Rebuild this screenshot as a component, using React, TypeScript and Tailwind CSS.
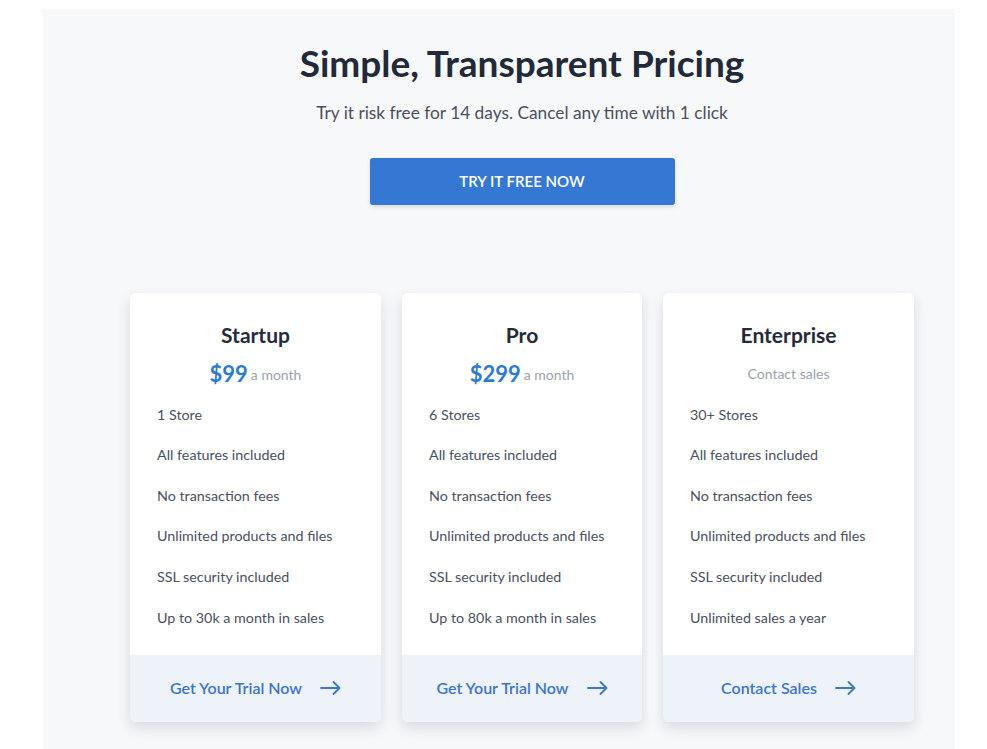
import React from "react";

type Plan = {
  name: string;
  price?: string;
  priceNote: string;
  features: string[];
  cta: string;
  width: string;
};

const plans: Plan[] = [
  {
    name: "Startup",
    price: "$99",
    priceNote: "a month",
    features: [
      "1 Store",
      "All features included",
      "No transaction fees",
      "Unlimited products and files",
      "SSL security included",
      "Up to 30k a month in sales",
    ],
    cta: "Get Your Trial Now",
    width: "w-[251px]",
  },
  {
    name: "Pro",
    price: "$299",
    priceNote: "a month",
    features: [
      "6 Stores",
      "All features included",
      "No transaction fees",
      "Unlimited products and files",
      "SSL security included",
      "Up to 80k a month in sales",
    ],
    cta: "Get Your Trial Now",
    width: "w-[240px]",
  },
  {
    name: "Enterprise",
    priceNote: "Contact sales",
    features: [
      "30+ Stores",
      "All features included",
      "No transaction fees",
      "Unlimited products and files",
      "SSL security included",
      "Unlimited sales a year",
    ],
    cta: "Contact Sales",
    width: "w-[251px]",
  },
];

function Arrow() {
  return (
    <svg width="21" height="14" viewBox="0 0 21 14" fill="none" className="ml-[18px]">
      <path d="M1 7H19.5M13.5 1L19.5 7L13.5 13" stroke="#3d76c9" strokeWidth="1.8" strokeLinecap="round" strokeLinejoin="round" />
    </svg>
  );
}

function Card({ plan }: { plan: Plan }) {
  return (
    <div className={`${plan.width} flex flex-col rounded-md bg-white shadow-[0_6px_14px_rgba(30,40,70,0.14)] overflow-hidden`}>
      <div className="flex flex-col px-[27px] pt-[28px] pb-[17px]">
        <div className="text-center text-[21px] leading-[28px] font-bold text-[#252b3b]">{plan.name}</div>
        <div className="mt-[10px] flex h-[28px] items-center justify-center">
          {plan.price ? (
            <>
              <span className="text-[22px] font-bold text-[#2c7bd1]">{plan.price}</span>
              <span className="ml-[3px] mt-[3px] text-[14px] text-[#9aa1ab]">{plan.priceNote}</span>
            </>
          ) : (
            <span className="text-[14px] text-[#9aa1ab]">{plan.priceNote}</span>
          )}
        </div>
        <ul className="mt-[7px] flex flex-col">
          {plan.features.map((f) => (
            <li key={f} className="flex h-[40.6px] items-center text-[14.3px] text-[#4a5060]">
              {f}
            </li>
          ))}
        </ul>
      </div>
      <div className="flex h-[67px] items-center justify-center bg-[#eef2f9]">
        <span className="text-[16px] font-semibold text-[#3d76c9]">{plan.cta}</span>
        <Arrow />
      </div>
    </div>
  );
}

export default function App() {
  return (
    <div className="min-h-[749px] bg-white pt-[9px]" style={{ fontFamily: "Lato, 'Noto Sans', sans-serif" }}>
      <div className="ml-[43px] w-[912px] bg-[#f7f8fa] pl-[87px] pr-[41px] pb-[40px]">
        <div className="flex flex-col items-center">
          <h1 className="mt-[31px] text-[37px] leading-[46px] font-bold text-[#222a3a]">Simple, Transparent Pricing</h1>
          <p className="mt-[15px] text-[17.3px] leading-[24px] text-[#4a5060]">Try it risk free for 14 days. Cancel any time with 1 click</p>
          <button className="mt-[33px] flex h-[47px] w-[305px] items-center justify-center rounded-[3px] bg-[#3478d4] text-[15px] font-semibold uppercase text-white shadow-[0_2px_4px_rgba(0,0,0,0.12)]">
            Try it free now
          </button>
        </div>
        <div className="mt-[88px] flex justify-center gap-[21px]">
          {plans.map((p) => (
            <Card key={p.name} plan={p} />
          ))}
        </div>
      </div>
    </div>
  );
}
